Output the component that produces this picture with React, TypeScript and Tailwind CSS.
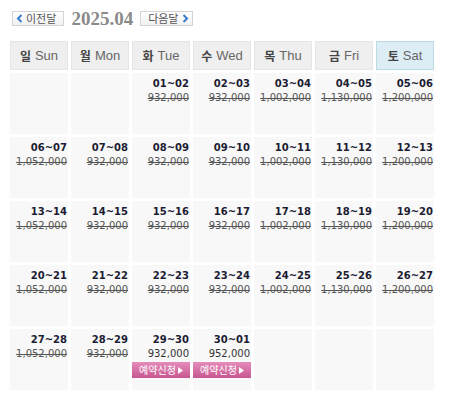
import React from 'react';

type Day = {
    range: string;
    price: string;
    open?: boolean;
} | null;

const weekdays = [
    { ko: '일', en: 'Sun' },
    { ko: '월', en: 'Mon' },
    { ko: '화', en: 'Tue' },
    { ko: '수', en: 'Wed' },
    { ko: '목', en: 'Thu' },
    { ko: '금', en: 'Fri' },
    { ko: '토', en: 'Sat' },
];

const weekPrices = ['1,052,000', '932,000', '932,000', '932,000', '1,002,000', '1,130,000', '1,200,000'];

const pad = (n: number) => (n < 10 ? `0${n}` : `${n}`);

const buildWeeks = (): Day[][] => {
    const days: Day[] = [null, null];
    for (let d = 1; d <= 30; d++) {
        const col = days.length % 7;
        const next = d === 30 ? 1 : d + 1;
        days.push({ range: `${pad(d)}~${pad(next)}`, price: weekPrices[col] });
    }
    days[30] = { range: '29~30', price: '932,000', open: true };
    days[31] = { range: '30~01', price: '952,000', open: true };
    while (days.length % 7 !== 0) days.push(null);

    const weeks: Day[][] = [];
    for (let i = 0; i < days.length; i += 7) weeks.push(days.slice(i, i + 7));
    return weeks;
};

const Chevron = ({ dir }: { dir: 'left' | 'right' }) => (
    <svg width="7" height="9" viewBox="0 0 7 9" className="shrink-0">
        <path
            d={dir === 'left' ? 'M5.5 1 L2 4.5 L5.5 8' : 'M1.5 1 L5 4.5 L1.5 8'}
            fill="none"
            stroke="#3b7cc9"
            strokeWidth="2"
        />
    </svg>
);

const App = () => {
    const weeks = buildWeeks();

    return (
        <div className="w-[449px] h-[395px] bg-white overflow-hidden font-['DejaVu_Sans',sans-serif]">
            {/* Month navigation */}
            <div className="flex items-center h-[26px] pt-[10px] pl-[12px] gap-[7px]">
                <button className="flex items-center gap-[3px] h-[15px] px-[3px] border border-[#d4d4d4] bg-gradient-to-b from-white to-[#f1f1f1] text-[11px] leading-none text-[#555] font-['Noto_Sans_CJK_KR',sans-serif]">
                    <Chevron dir="left" />
                    <span className="pr-[4px]">이전달</span>
                </button>
                <span className="text-[19px] leading-none font-bold text-[#8a8a8a] font-['Liberation_Serif',serif]">2025.04</span>
                <button className="flex items-center gap-[3px] h-[15px] px-[3px] border border-[#d4d4d4] bg-gradient-to-b from-white to-[#f1f1f1] text-[11px] leading-none text-[#555] font-['Noto_Sans_CJK_KR',sans-serif]">
                    <span className="pl-[4px]">다음달</span>
                    <Chevron dir="right" />
                </button>
            </div>

            {/* Calendar */}
            <div className="mt-[15px] ml-[10px] w-[424px] grid grid-cols-7 gap-[3px]">
                {weekdays.map((w, i) => (
                    <div
                        key={w.en}
                        className={
                            i === 6
                                ? 'h-[29px] flex items-center justify-center gap-[4px] border border-[#bcd9e6] bg-[#dcedf5] text-[12px] text-[#555]'
                                : 'h-[29px] flex items-center justify-center gap-[4px] border border-[#e6e6e6] bg-[#efefef] text-[12px] text-[#555]'
                        }
                    >
                        <span className="font-bold font-['Noto_Sans_CJK_KR',sans-serif] text-[#444]">{w.ko}</span>
                        <span className="font-['Liberation_Sans',sans-serif] text-[13px] text-[#666]">{w.en}</span>
                    </div>
                ))}

                {weeks.map((week, wi) =>
                    week.map((day, di) => (
                        <div key={`${wi}-${di}`} className="h-[61px] bg-[#f8f8f8] pt-[3px] text-right">
                            {day && (
                                <>
                                    <div className="pr-[1px] text-[10px] leading-[15px] font-bold text-[#1c1c33]">{day.range}</div>
                                    {day.open ? (
                                        <>
                                            <div className="pr-[1px] text-[10px] leading-[14px] text-[#333]">{day.price}</div>
                                            <button className="mt-[1px] w-full h-[16px] flex items-center justify-center gap-[2px] bg-gradient-to-b from-[#e58cbb] to-[#c65690] text-white text-[10px] leading-none font-['Noto_Sans_CJK_KR',sans-serif]">
                                                예약신청
                                                <svg width="5" height="7" viewBox="0 0 5 7">
                                                    <path d="M0 0 L5 3.5 L0 7 Z" fill="white" />
                                                </svg>
                                            </button>
                                        </>
                                    ) : (
                                        <div className="pr-[1px] text-[10px] leading-[14px] text-[#555] line-through">{day.price}</div>
                                    )}
                                </>
                            )}
                        </div>
                    ))
                )}
            </div>
        </div>
    );
};

export default App;
